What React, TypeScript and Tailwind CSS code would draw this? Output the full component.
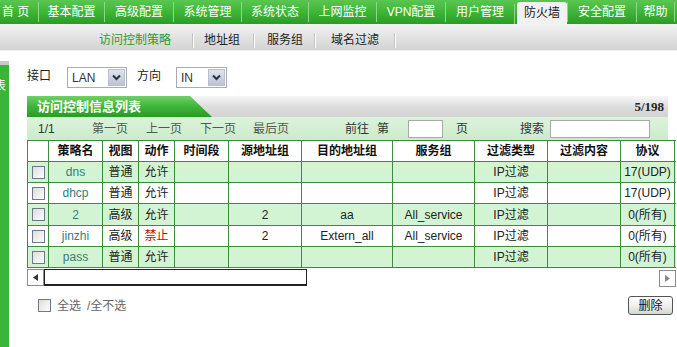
import React from 'react';

interface Row {
  name: string;
  view: string;
  act: string;
  time?: string;
  src?: string;
  dst?: string;
  svc?: string;
  type: string;
  content?: string;
  proto: string;
  h: string;
}

const navItems = [
  { label: '基本配置', w: 'w-[66px]' },
  { label: '高级配置', w: 'w-[69px]' },
  { label: '系统管理', w: 'w-[68px]' },
  { label: '系统状态', w: 'w-[67px]' },
  { label: '上网监控', w: 'w-[68px]' },
  { label: 'VPN配置', w: 'w-[69px]' },
  { label: '用户管理', w: 'w-[69px]' },
];

const rows: Row[] = [
  { name: 'dns', view: '普通', act: '允许', type: 'IP过滤', proto: '17(UDP)', h: 'h-[21px]' },
  { name: 'dhcp', view: '普通', act: '允许', type: 'IP过滤', proto: '17(UDP)', h: 'h-[21px]' },
  { name: '2', view: '高级', act: '允许', src: '2', dst: 'aa', svc: 'All_service', type: 'IP过滤', proto: '0(所有)', h: 'h-[22px]' },
  { name: 'jinzhi', view: '高级', act: '禁止', src: '2', dst: 'Extern_all', svc: 'All_service', type: 'IP过滤', proto: '0(所有)', h: 'h-[21px]' },
  { name: 'pass', view: '普通', act: '允许', type: 'IP过滤', proto: '0(所有)', h: 'h-[21px]' },
];

const colW = ['w-[21px]', 'w-[54px]', 'w-[36px]', 'w-[36px]', 'w-[54px]', 'w-[73px]', 'w-[91px]', 'w-[82px]', 'w-[73px]', 'w-[73px]', 'w-[54px]', 'w-[80px]'];
const headers = ['', '策略名', '视图', '动作', '时间段', '源地址组', '目的地址组', '服务组', '过滤类型', '过滤内容', '协议', ''];

const Sep = () => <div className="w-px h-[20px] bg-[#8fd58a] shrink-0" />;

const SubSep = () => (
  <div className="flex shrink-0">
    <div className="w-px h-[15px] bg-[#c4c4c4]" />
    <div className="w-px h-[15px] bg-white" />
  </div>
);

const Check = () => (
  <div className="w-[13px] h-[13px] border border-[#6b7b8c] bg-gradient-to-br from-[#dcdcdc] to-white" />
);

const Arrow = () => (
  <div className="w-[17px] h-[17px] border border-[#b7bfd0] bg-gradient-to-b from-[#dfe3ee] to-[#bcc3d6] flex items-center justify-center">
    <svg width="9" height="7" viewBox="0 0 9 7">
      <polyline points="1,1.5 4.5,5 8,1.5" fill="none" stroke="#2a3040" strokeWidth="2" />
    </svg>
  </div>
);

const Select = ({ value, w }: { value: string; w: string }) => (
  <div className={`${w} h-[21px] border border-[#a5acb5] bg-white flex items-center justify-between pl-[4px] pr-px`}>
    <span className="text-[12px] text-[#333]">{value}</span>
    <Arrow />
  </div>
);

const Cell = ({ w, children, className = '' }: { w: string; children?: React.ReactNode; className?: string }) => (
  <div className={`${w} shrink-0 border-r border-[#3d8b3d] flex items-center justify-center overflow-hidden whitespace-nowrap ${className}`}>
    {children}
  </div>
);

export default function App() {
  return (
    <div className="w-[677px] h-[347px] overflow-hidden bg-white text-[12px] text-[#222] font-['Liberation_Sans','Noto_Sans_CJK_SC',sans-serif]">
      {/* top nav */}
      <div className="h-[24px] flex bg-gradient-to-b from-[#5ac651] via-[#3db636] to-[#2b9c26] text-white">
        <div className="w-[38px] pl-[2px] flex items-center">首&nbsp;页</div>
        {navItems.map((n) => (
          <div key={n.label} className={`${n.w} flex items-center shrink-0`}>
            <Sep />
            <span className="flex-1 text-center">{n.label}</span>
          </div>
        ))}
        <div className="w-[53px] flex items-end shrink-0">
          <Sep />
          <div className="ml-[2px] w-[50px] h-[22px] rounded-t-[3px] bg-[#f1f1f1] text-[#1a1a1a] flex items-center justify-center">防火墙</div>
        </div>
        <div className="w-[69px] flex items-center shrink-0">
          <Sep />
          <span className="flex-1 text-center">安全配置</span>
        </div>
        <div className="w-[38px] flex items-center shrink-0">
          <Sep />
          <span className="flex-1 text-center">帮助</span>
        </div>
        <div className="flex items-center">
          <Sep />
        </div>
      </div>

      {/* sub nav */}
      <div className="h-[27px] flex items-center pt-[6px] bg-gradient-to-b from-[#f3f3f3] to-[#d3d3d3] border-b border-[#ececec]">
        <span className="ml-[99px] mr-[21px] text-[#2e9a2a]">访问控制策略</span>
        <SubSep />
        <span className="ml-[10px] mr-[13px]">地址组</span>
        <SubSep />
        <span className="ml-[12px] mr-[11px]">服务组</span>
        <SubSep />
        <span className="ml-[15px] mr-[15px]">域名过滤</span>
        <SubSep />
      </div>

      <div className="flex">
        {/* left side tab */}
        <div className="w-[9px] mt-[10px] h-[290px] overflow-hidden shrink-0">
          <div className="h-[4px] bg-[#c9c9c9]" />
          <div className="h-[286px] bg-[#3ab53a] relative">
            <span className="absolute left-[-6px] top-[12px] text-white text-[12px]">表</span>
          </div>
        </div>

        {/* content */}
        <div className="ml-[18px] mt-[16px] w-[650px]">
          <div className="flex items-center h-[21px]">
            <span className="w-[40px] -mt-[4px]">接口</span>
            <Select value="LAN" w="w-[60px]" />
            <span className="ml-[10px] w-[39px] -mt-[4px]">方向</span>
            <Select value="IN" w="w-[51px]" />
          </div>

          {/* list header */}
          <div className="mt-[8px] w-[641px] h-[21px] flex items-center justify-between bg-gradient-to-b from-[#f6f6f6] via-[#dedede] to-[#d2d2d2]">
            <div className="w-[185px] h-full bg-gradient-to-b from-[#6fd066] via-[#3fb43a] to-[#2a9b26] [clip-path:polygon(0_0,163px_0,185px_100%,0_100%)] flex items-center pl-[10px]">
              <span className="text-white font-bold text-[13px]">访问控制信息列表</span>
            </div>
            <span className="pr-[4px] font-bold text-[13px] font-['Liberation_Serif',serif]">5/198</span>
          </div>

          {/* toolbar */}
          <div className="w-[641px] h-[23px] flex items-center bg-gradient-to-b from-[#dcf3dc] to-[#cbebcb] text-[#333]">
            <span className="w-[65px] pl-[11px]">1/1</span>
            <span className="w-[54px] text-[#555]">第一页</span>
            <span className="w-[54px] text-[#555]">上一页</span>
            <span className="w-[53px] text-[#555]">下一页</span>
            <span className="w-[92px] text-[#555]">最后页</span>
            <span className="w-[32px]">前往</span>
            <span className="w-[31px]">第</span>
            <div className="w-[35px] h-[18px] bg-white border border-[#a9a9a9]" />
            <span className="ml-[13px] w-[64px]">页</span>
            <span className="w-[30px]">搜索</span>
            <div className="w-[100px] h-[18px] bg-white border border-[#a9a9a9]" />
          </div>

          {/* table */}
          <div className="w-[649px] overflow-hidden">
            <div className="w-max border-l border-t border-[#3d8b3d]">
              <div className="flex h-[21px] border-b border-[#3d8b3d] bg-white font-bold text-[#111]">
                {headers.map((h, i) => (
                  <Cell key={i} w={colW[i]}>{h}</Cell>
                ))}
              </div>
              {rows.map((r, i) => (
                <div key={r.name} className={`flex ${r.h} border-b border-[#3d8b3d] ${i % 2 === 0 ? 'bg-[#d3f4d3]' : 'bg-white'}`}>
                  <Cell w={colW[0]}><Check /></Cell>
                  <Cell w={colW[1]} className="text-[#2f7f7f]">{r.name}</Cell>
                  <Cell w={colW[2]}>{r.view}</Cell>
                  <Cell w={colW[3]} className={r.act === '禁止' ? 'text-[#d40000]' : ''}>{r.act}</Cell>
                  <Cell w={colW[4]}>{r.time}</Cell>
                  <Cell w={colW[5]}>{r.src}</Cell>
                  <Cell w={colW[6]}>{r.dst}</Cell>
                  <Cell w={colW[7]}>{r.svc}</Cell>
                  <Cell w={colW[8]}>{r.type}</Cell>
                  <Cell w={colW[9]}>{r.content}</Cell>
                  <Cell w={colW[10]}>{r.proto}</Cell>
                  <Cell w={colW[11]} />
                </div>
              ))}
            </div>
          </div>

          {/* fake horizontal scrollbar */}
          <div className="mt-[1px] w-[649px] h-[17px] flex">
            <div className="w-[17px] h-[17px] border border-[#8c8c8c] bg-white flex items-center justify-center">
              <svg width="5" height="7" viewBox="0 0 5 7"><polygon points="5,0 0,3.5 5,7" fill="#333" /></svg>
            </div>
            <div className="w-[263px] h-[17px] border border-[#222] border-b-2 bg-white" />
            <div className="flex-1" />
            <div className="w-[17px] h-[17px] mt-px border border-[#8c8c8c] bg-white flex items-center justify-center">
              <svg width="5" height="7" viewBox="0 0 5 7"><polygon points="0,0 5,3.5 0,7" fill="#888" /></svg>
            </div>
          </div>

          {/* footer */}
          <div className="mt-[10px] w-[646px] flex items-center justify-between">
            <div className="flex items-center ml-[11px] text-[#666]">
              <Check />
              <span className="ml-[6px]">全选</span>
              <span className="ml-[6px]">/全不选</span>
            </div>
            <button className="w-[45px] h-[19px] rounded-[3px] border border-[#555] bg-gradient-to-b from-white via-[#f0f0f0] to-[#cfd8cf] text-[12px] text-[#111] flex items-center justify-center">
              删除
            </button>
          </div>
        </div>
      </div>
    </div>
  );
}
